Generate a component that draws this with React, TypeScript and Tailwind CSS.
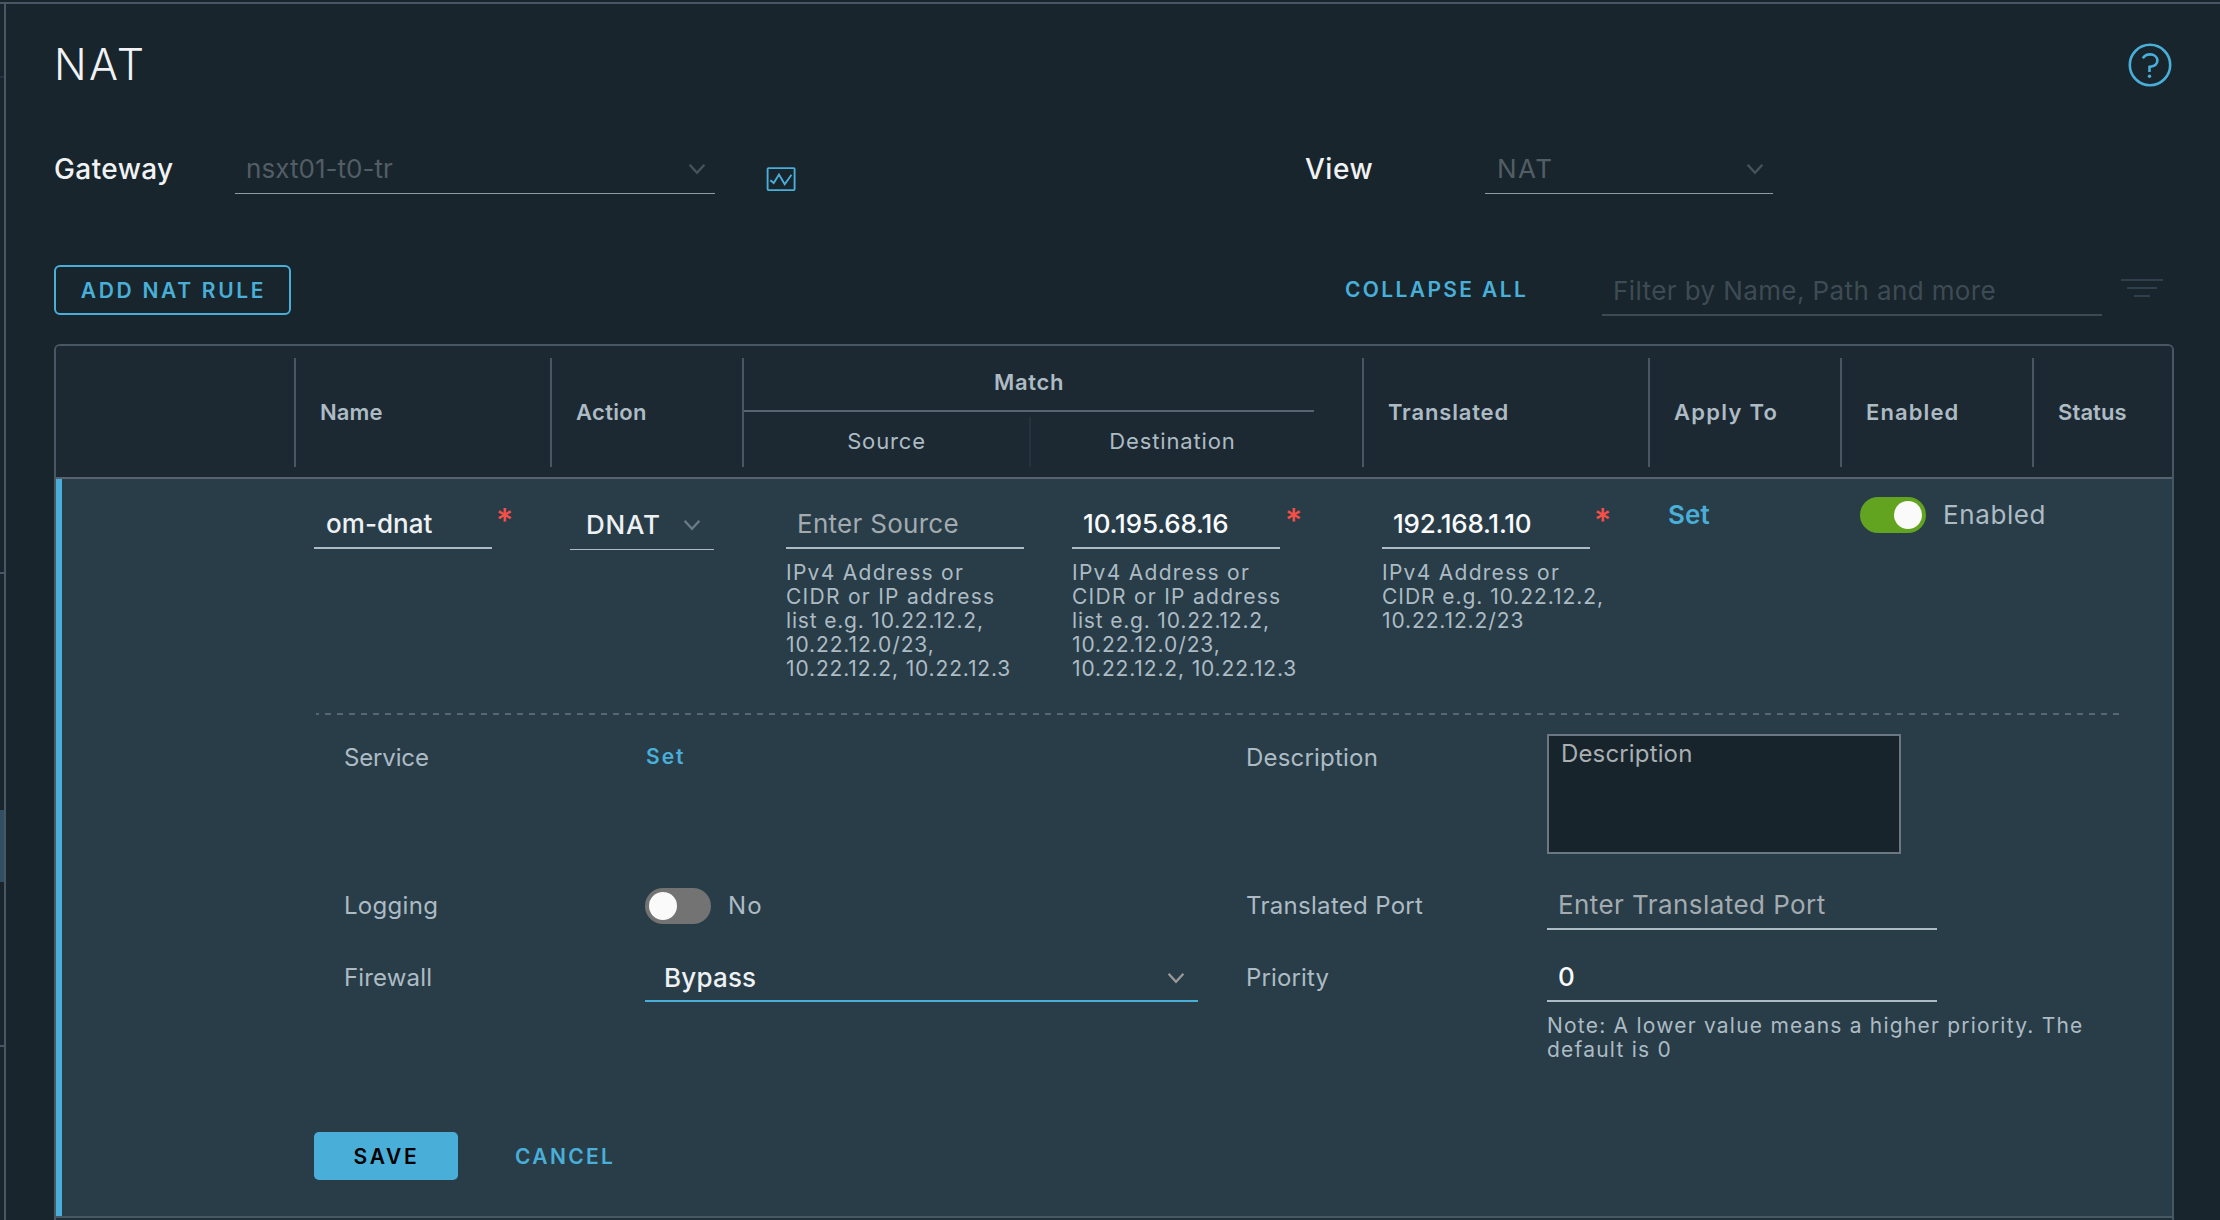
import type { ReactNode } from "react";

function Chevron({ className }: { className: string }) {
  return (
    <svg width="18" height="12" viewBox="0 0 18 12" fill="none" className={`shrink-0 ${className}`}>
      <path d="M1.6 1.8 9 9.8l7.4-8" stroke="currentColor" strokeWidth="2.3" />
    </svg>
  );
}

function Required() {
  return <span className="-ml-px h-[50px] w-[16px] text-center text-[33px] leading-[41px] font-medium text-[#f54f47]">*</span>;
}

function HeaderCell({ className, children }: { className: string; children?: ReactNode }) {
  return (
    <div
      className={`flex h-[109px] items-center border-l-2 border-[#485764] pb-[2px] text-[22px] leading-7 font-semibold whitespace-nowrap text-[#adbbc4] ${className}`}
    >
      {children}
    </div>
  );
}

function Field({ className, children }: { className: string; children: ReactNode }) {
  return (
    <div className={`h-[49px] border-b-2 border-[#adbbc4] text-[26px] leading-[48px] whitespace-nowrap ${className}`}>
      {children}
    </div>
  );
}

function Hint({ className, children }: { className: string; children: ReactNode }) {
  return <div className={`mt-[12px] text-[21px] leading-6 whitespace-nowrap text-[#adbbc4] ${className}`}>{children}</div>;
}

function AddressListHint() {
  return (
    <Hint className="tracking-[1.28px]">
      IPv4 Address or
      <br />
      CIDR or IP address
      <br />
      <span className="tracking-[0.82px]">list e.g. 10.22.12.2,</span>
      <br />
      <span className="tracking-[0.89px]">10.22.12.0/23,</span>
      <br />
      <span className="tracking-[0.86px]">10.22.12.2, 10.22.12.3</span>
    </Hint>
  );
}

function SideRail() {
  return (
    <div className="flex h-full w-[4px] shrink-0 flex-col">
      <div className="mt-[72px] h-[2px] bg-[#25333c]" />
      <div className="mt-[494px] h-[2px] bg-[#485764]" />
      <div className="mt-[236px] h-[72px] bg-[#324f62]" />
      <div className="mt-[163px] h-[2px] bg-[#485764]" />
    </div>
  );
}

function TableHeader() {
  return (
    <div className="flex h-[133px] border-b-2 border-[#566470] bg-[#1c2932] pt-[12px] pl-[238px]">
      <HeaderCell className="w-[256px] pl-[24px] tracking-[0.12px]">Name</HeaderCell>
      <HeaderCell className="w-[192px] pl-[24px] tracking-[0.32px]">Action</HeaderCell>
      <div className="h-[109px] w-[620px] border-l-2 border-[#485764] text-center text-[22px] text-[#adbbc4]">
        <div className="h-[54px] w-[570px] border-b-2 border-[#566470] leading-[48px] font-semibold tracking-[0.68px]">
          Match
        </div>
        <div className="flex h-[55px] w-[570px] leading-[58px]">
          <div className="w-[285px] tracking-[0.84px]">Source</div>
          <div className="mt-[5px] w-[2px] bg-[#22353e]" />
          <div className="w-[283px] tracking-[0.85px]">Destination</div>
        </div>
      </div>
      <HeaderCell className="w-[286px] pl-[24px] tracking-[0.83px]">Translated</HeaderCell>
      <HeaderCell className="w-[192px] pl-[24px] tracking-[1.25px]">Apply To</HeaderCell>
      <HeaderCell className="w-[192px] pl-[24px] tracking-[1.1px]">Enabled</HeaderCell>
      <HeaderCell className="w-[138px] pl-[24px] tracking-[0.1px]">Status</HeaderCell>
    </div>
  );
}

function RuleFields() {
  return (
    <div className="flex h-[213px] pl-[252px]">
      <div className="flex w-[256px]">
        <Field className="mr-[5px] w-[178px] pl-[12px] font-[450] tracking-[0.05px] text-[#eef1f3]">om-dnat</Field>
        <Required />
      </div>
      <div className="w-[216px]">
        <div className="flex h-[50px] w-[144px] items-center justify-between border-b border-[#adbbc4] pr-[13px] pl-[16px] text-[26px] leading-[49px] font-[450] tracking-[0.8px] text-[#eef1f3]">
          DNAT
          <Chevron className="text-[#6a7b86]" />
        </div>
      </div>
      <div className="w-[286px]">
        <Field className="w-[238px] pl-[11px] tracking-[0.28px] text-[#a3abb0]">Enter Source</Field>
        <AddressListHint />
      </div>
      <div className="w-[310px]">
        <div className="flex h-[49px]">
          <Field className="mr-[6px] w-[208px] pl-[11px] font-[450] tracking-[-0.15px] text-[#f8fafb]">10.195.68.16</Field>
          <Required />
        </div>
        <AddressListHint />
      </div>
      <div className="w-[286px]">
        <div className="flex h-[49px]">
          <Field className="mr-[5px] w-[208px] pl-[11px] font-medium tracking-[-0.25px] text-[#f8fafb]">192.168.1.10</Field>
          <Required />
        </div>
        <Hint className="tracking-[1.28px]">
          IPv4 Address or
          <br />
          <span className="tracking-[0.95px]">CIDR e.g. 10.22.12.2,</span>
          <br />
          <span className="tracking-[0.89px]">10.22.12.2/23</span>
        </Hint>
      </div>
      <div className="w-[192px] text-[26px] leading-[30px] font-semibold tracking-[0.1px] text-[#49afd9]">Set</div>
      <div className="-mt-[3px] flex h-[36px] items-center">
        <div className="flex h-[36px] w-[66px] items-center justify-end rounded-full bg-[#62a420] pr-[4px]">
          <div className="size-[28px] rounded-full bg-[#fafafa]" />
        </div>
        <div className="pl-[17px] text-[26px] leading-[36px] tracking-[0.6px] text-[#adbbc4]">Enabled</div>
      </div>
    </div>
  );
}

function RuleDetails() {
  return (
    <div className="flex h-[328px] pt-[19px] pl-[282px] text-[24px] text-[#adbbc4]">
      <div className="w-[902px]">
        <div className="flex h-[120px] leading-[48px]">
          <div className="w-[301px] tracking-[-0.15px]">Service</div>
          <div className="pl-[1px] text-[21px] leading-[45px] font-semibold tracking-[2px] text-[#49afd9]">Set</div>
        </div>
        <div className="mt-[28px] flex h-[48px] leading-[48px]">
          <div className="w-[301px] tracking-[0.3px]">Logging</div>
          <div className="mt-[6px] flex h-[36px] w-[66px] items-center rounded-full bg-[#737373] pl-[4px]">
            <div className="size-[28px] rounded-full bg-[#fafafa]" />
          </div>
          <div className="pl-[17px] tracking-[1.2px]">No</div>
        </div>
        <div className="mt-[24px] flex h-[48px] leading-[48px]">
          <div className="w-[301px] tracking-[0.15px]">Firewall</div>
          <div className="flex w-[553px] items-center justify-between border-b-2 border-[#49afd9] pt-px pr-[13px] pl-[19px] text-[26px] font-medium tracking-[0.2px] text-[#eef1f3]">
            Bypass
            <Chevron className="text-[#999999]" />
          </div>
        </div>
      </div>
      <div>
        <div className="flex h-[120px] leading-[48px]">
          <div className="w-[301px] tracking-[0.2px]">Description</div>
          <div className="w-[354px] border-2 border-[#6b7883] bg-[#17242b] pl-[12px] leading-[36px] tracking-[0.15px] text-[#a9afb3]">
            Description
          </div>
        </div>
        <div className="mt-[28px] flex h-[48px] leading-[48px]">
          <div className="w-[301px] tracking-[0.3px]">Translated Port</div>
          <div className="w-[390px] border-b-2 border-[#adbbc4] pl-[11px] text-[26px] leading-[46px] tracking-[0.43px] text-[#a3abb0]">
            Enter Translated Port
          </div>
        </div>
        <div className="mt-[24px] flex h-[48px] leading-[48px]">
          <div className="w-[301px] tracking-[0.15px]">Priority</div>
          <div className="w-[390px] border-b-2 border-[#adbbc4] pl-[11px] text-[26px] leading-[46px] font-medium text-[#f8fafb]">
            0
          </div>
        </div>
        <div className="pl-[301px]">
          <Hint className="tracking-[1.22px]">
            Note: A lower value means a higher priority. The
            <br />
            default is 0
          </Hint>
        </div>
      </div>
    </div>
  );
}

export default function App() {
  return (
    <div className="h-[1220px] w-[2220px] overflow-hidden bg-[#18252c] pt-[2px] font-['Inter',sans-serif]">
      <div className="flex h-[1218px] border-t-2 border-[#485764]">
        <SideRail />
        <main className="flex min-w-0 flex-1 flex-col border-l-2 border-[#485764] pl-[48px]">
          <header className="flex h-[119px] items-center justify-between pr-[48px]">
            <h1 className="text-[43px] leading-[60px] font-[350] tracking-[2.4px] text-[#f0f2f4]">NAT</h1>
            <svg width="44" height="44" viewBox="0 0 44 44" fill="none" stroke="#49afd9" className="mt-[3px]">
              <circle cx="22" cy="22" r="20.2" strokeWidth="2.6" />
              <path d="M14.8 15.2c1.8-2.6 4.3-3.8 7.2-3.8 4.3 0 7.4 2.6 7.4 6.2 0 4-3.2 5.8-7.9 6.3v5" strokeWidth="2.6" />
              <circle cx="21.5" cy="33.2" r="1.7" fill="#49afd9" stroke="none" />
            </svg>
          </header>

          <div className="mt-[21px] flex h-[50px] text-[28px] leading-[50px] text-[#f0f2f4]">
            <div className="w-[181px] font-[450] tracking-[0.4px]">Gateway</div>
            <div className="flex w-[480px] items-center justify-between border-b border-[#8f9ca5] pr-[9px] pl-[11px] text-[26px] tracking-[0.04px] text-[#535d65]">
              nsxt01-t0-tr
              <Chevron className="text-[#46525c]" />
            </div>
            <svg width="30" height="24" viewBox="0 0 30 24" fill="none" stroke="#49afd9" className="mt-[23px] ml-[51px]">
              <rect x="1.6" y="1.1" width="27" height="22" rx="1" strokeWidth="1.9" />
              <path d="M4.3 13.2 7.7 16 13 7.5l5.7 9.7 6.8-9.5" strokeWidth="1.9" />
            </svg>
            <div className="ml-[509px] w-[180px] font-[450] tracking-[0.5px]">View</div>
            <div className="flex w-[288px] items-center justify-between border-b border-[#8f9ca5] pr-[9px] pl-[12px] text-[26px] tracking-[1.5px] text-[#535d65]">
              NAT
              <Chevron className="text-[#46525c]" />
            </div>
          </div>

          <div className="mt-[71px] flex h-[50px]">
            <button className="w-[237px] rounded-[6px] border-2 border-[#49afd9] pt-px pl-[2px] text-center text-[21px] leading-[46px] font-semibold tracking-[2.7px] text-[#49afd9]">
              ADD NAT RULE
            </button>
            <div className="ml-[1054px] w-[257px] text-[21px] leading-[49px] font-semibold tracking-[2.36px] text-[#49afd9]">
              COLLAPSE ALL
            </div>
            <div className="h-[51px] w-[500px] border-b-2 border-[#3d4953] pl-[11px] text-[26px] leading-[52px] tracking-[0.4px] text-[#3f4b54]">
              Filter by Name, Path and more
            </div>
            <div className="mt-[14px] ml-[19px] flex w-[42px] flex-col items-center gap-[6px]">
              <div className="h-[2px] w-[42px] bg-[#2f3f4c]" />
              <div className="h-[2px] w-[30px] bg-[#2f3f4c]" />
              <div className="h-[2px] w-[16px] bg-[#2f3f4c]" />
            </div>
          </div>

          <section className="mt-[29px] w-[2120px] flex-1 overflow-hidden rounded-t-[6px] border-2 border-b-0 border-[#485764] bg-[#203039]">
            <TableHeader />
            <div className="h-[739px] border-b-2 border-[#485764]">
              <div className="h-[737px] border-l-[6px] border-[#49afd9] bg-[#283d48] pt-[21px]">
                <RuleFields />
                <div className="ml-[254px] h-[2px] w-[1809px] bg-[repeating-linear-gradient(90deg,#566772_0_3px,transparent_3px_9px,#566772_9px_12px)]" />
                <RuleDetails />
                <div className="mt-[89px] flex h-[48px] pl-[252px] text-[21px] leading-[50px] font-semibold">
                  <button className="w-[144px] rounded-[5px] bg-[#49afd9] pl-[1px] text-center tracking-[2.7px] text-black">SAVE</button>
                  <button className="pl-[57px] tracking-[2.33px] text-[#49afd9]">CANCEL</button>
                </div>
              </div>
            </div>
          </section>
        </main>
      </div>
    </div>
  );
}
